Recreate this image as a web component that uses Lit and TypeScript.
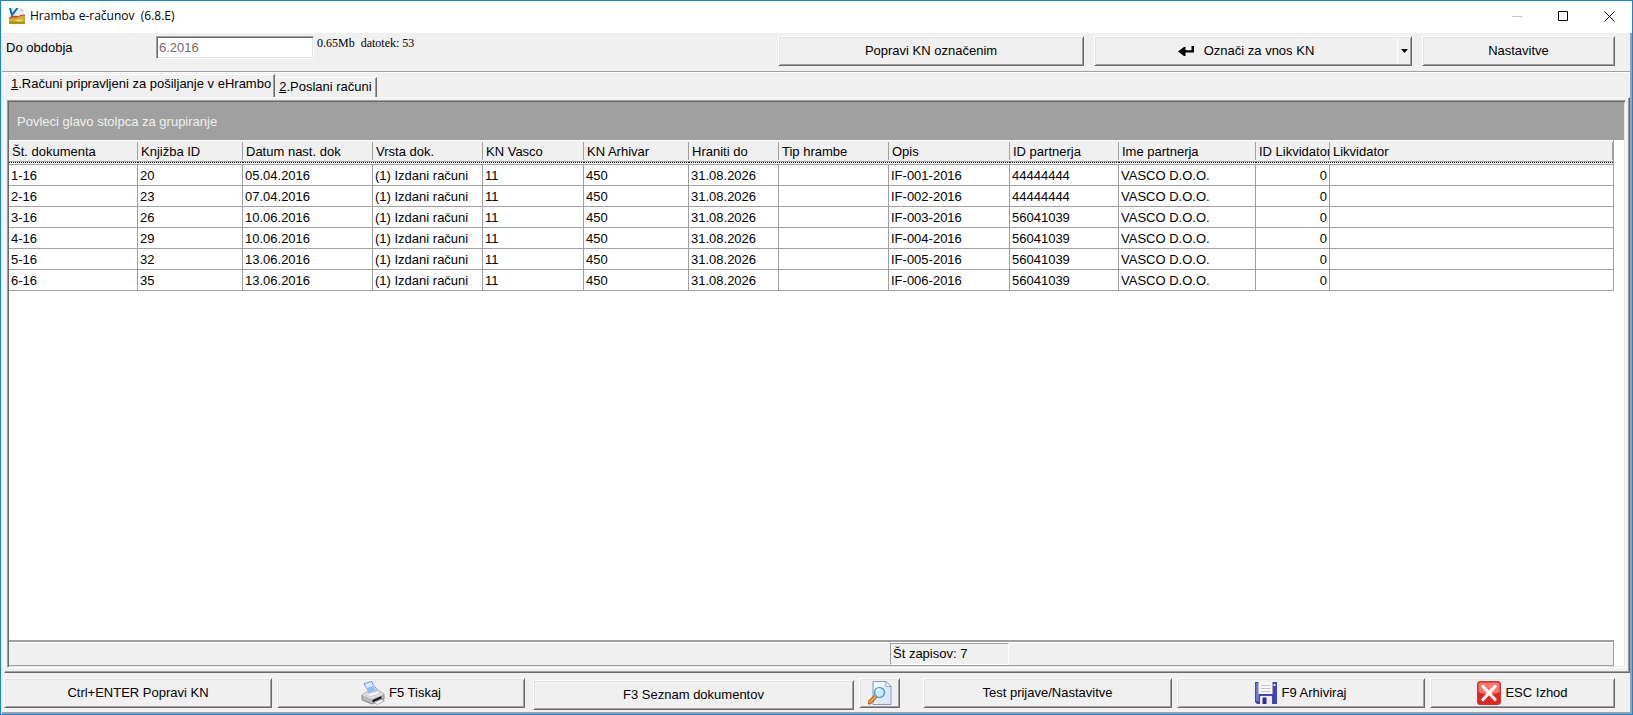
import { LitElement, html, css, svg } from "lit";
import { customElement, state } from "lit/decorators.js";

interface Column {
  title: string;
  width: number | null;
  numeric?: boolean;
}

const COLUMNS: Column[] = [
  { title: "Št. dokumenta", width: 129 },
  { title: "Knjižba ID", width: 105 },
  { title: "Datum nast. dok", width: 130 },
  { title: "Vrsta dok.", width: 110 },
  { title: "KN Vasco", width: 101 },
  { title: "KN Arhivar", width: 105 },
  { title: "Hraniti do", width: 90 },
  { title: "Tip hrambe", width: 110 },
  { title: "Opis", width: 121 },
  { title: "ID partnerja", width: 109 },
  { title: "Ime partnerja", width: 137 },
  { title: "ID Likvidator", width: 74, numeric: true },
  { title: "Likvidator", width: null },
];

const record = (n: number, id: string, date: string, partner: string) => [
  `${n}-16`, id, date, "(1) Izdani računi", "11", "450", "31.08.2026", "",
  `IF-00${n}-2016`, partner, "VASCO D.O.O.", "0", "",
];

const ROWS = [
  record(1, "20", "05.04.2016", "44444444"),
  record(2, "23", "07.04.2016", "44444444"),
  record(3, "26", "10.06.2016", "56041039"),
  record(4, "29", "10.06.2016", "56041039"),
  record(5, "32", "13.06.2016", "56041039"),
  record(6, "35", "13.06.2016", "56041039"),
];

const appIcon = html`<svg width="16" height="16" viewBox="0 0 16 16" aria-hidden="true">
  ${svg`<path d="M1 0h11l3 3v8H1z" fill="#e3eef4"/>
  <path d="M12 0l3 3h-3z" fill="#b9ccd4"/>
  <path d="M0 11C4 6.500 7 10 10 8.500s4-1 6-1V16H0z" fill="#d0b02a"/>
  <path d="M0 10C4 6 7 9 10 7.700s4-1.200 6-1.200v1.300c-3 0-5 .5-7 1.400s-6-.5-9 2z" fill="#c8433c"/>
  <path d="M0 14c4-2 8 1 16-1v3H0z" fill="#b3930f"/>
  <path d="M6.500 12.500h2m1-1v2m1.500-2v2m2-2v2" stroke="#f3e7a5"/>
  <path d="M1 0L3 7L8.500 0" fill="none" stroke="#1769b5" stroke-width="2"/>`}
</svg>`;

const enterIcon = html`<svg width="16" height="10" viewBox="0 0 16 10" aria-hidden="true">
  ${svg`<path d="M13.500 0H16v6.600H7.500V10H6L0 5.400L6 1h1.500v3.200h6z" fill="#000"/>`}
</svg>`;

const printerIcon = html`<svg width="24" height="24" viewBox="0 0 24 24" aria-hidden="true">
  ${svg`<path d="M3 2.500l8-2c0 4 5 6 5.500 9.500l-8 3C8 9 4 6 3 2.500z" fill="#d5e9ff" stroke="#6a7fd0" stroke-width=".8"/>
  <path d="M6 7l6-2 3 4-7 3z" fill="#8fc0f7"/>
  <path d="M1 14l6-4 1 2 9-3 6 4v5l-12 5L1 19z" fill="#b8b8bc" stroke="#77777c" stroke-width=".8"/>
  <path d="M1 14l6-4 1 2 9-3 6 4-12 5z" fill="#e4e4e8"/>
  <path d="M4 14l4-2 9-2 3 2-10 3.500z" fill="#f7f7fa" stroke="#a8a8ae" stroke-width=".5"/>
  <path d="M5 11.500l3 1.500 8.500-3-.5-1.500-8 3z" fill="#a9cdf8"/>
  <path d="M11.500 19l9-4v2.500l-9 4z" fill="#17171a"/>
  <path d="M13 21.500l7-3 3.500 1.500-7 3.500z" fill="#f4f4f6" stroke="#88888c" stroke-width=".6"/>`}
</svg>`;

const previewIcon = html`<svg width="24" height="24" viewBox="0 0 24 24" aria-hidden="true">
  ${svg`<path d="M5 .5h13l5 5v18H5z" fill="#dce9fb" stroke="#8795c8"/>
  <path d="M6 1h11l-9 22H6z" fill="#f3f8ff"/>
  <path d="M18 .5v5h5z" fill="#fff" stroke="#8795c8" stroke-width=".8"/>
  <path d="M8 15L1.500 21.500" stroke="#a85c12" stroke-width="4" stroke-linecap="round"/>
  <path d="M8 15L1.800 21.200" stroke="#f6a233" stroke-width="2.400" stroke-linecap="round"/>
  <circle cx="11.500" cy="11.500" r="5" fill="#c9edff" stroke="#5c9fd6" stroke-width="1.600"/>
  <path d="M8.500 11a3 3 0 0 1 3-3" fill="none" stroke="#fff" stroke-width="1.400"/>`}
</svg>`;

const diskIcon = html`<svg width="22" height="22" viewBox="0 0 22 22" aria-hidden="true">
  ${svg`<path d="M0 0h22v22H2l-2-2z" fill="#4444b4"/>
  <path d="M1 1h3v18H1z" fill="#7474d8"/>
  <path d="M3.500 0h14v12h-14z" fill="#f8f8f8"/>
  <path d="M6 3.500h9.500M6 6.500h9.500M6 9.500h9.500" stroke="#c4c4c4"/>
  <path d="M5 14h12v8H5z" fill="#ececf2"/>
  <path d="M7.500 15.500h4V22h-4z" fill="#30308c"/>
  <path d="M18.500 2h2v2h-2z" fill="#e4e4f8"/>`}
</svg>`;

const closeIcon = html`<svg width="24" height="24" viewBox="0 0 24 24" aria-hidden="true">
  ${svg`<rect x=".5" y=".5" width="23" height="23" rx="2.500" fill="#e5231f" stroke="#c23a33"/>
  <path d="M1.500 3a2 2 0 0 1 2-1.500h17a2 2 0 0 1 2 1.500v8c-6 3-15 3-21 0z" fill="#f4786c"/>
  <path d="M6 5.500l12 13M18 5.500L6 18.500" stroke="#fff" stroke-width="3.200" stroke-linecap="round"/>`}
</svg>`;

@customElement("app-root")
export class AppRoot extends LitElement {
  @state() private tab = 0;

  static styles = css`
    :host {
      display: flex;
      flex-direction: column;
      box-sizing: border-box;
      height: 100vh;
      border: 1px solid #1883d7;
      background: #f0f0f0;
      color: #000;
      font: 13px/20px "Liberation Sans", Arial, sans-serif;
    }
    * { box-sizing: border-box; }
    button {
      margin: 0;
      padding: 0;
      border: 0;
      background: none;
      color: inherit;
      font: inherit;
      white-space: nowrap;
    }
    svg { display: block; flex: none; }

    .titlebar {
      display: flex;
      align-items: center;
      height: 32px;
      padding: 0 8px 2px;
      background: #fff;
      font: 12px/16px "Open Sans", "Noto Sans", sans-serif;
    }
    .titlebar h1 {
      flex: 1;
      margin: 0 5px;
      font: inherit;
      white-space: pre;
    }
    .caption { display: flex; gap: 16px; }
    .caption button {
      display: flex;
      width: 30px;
      height: 28px;
      align-items: center;
      justify-content: center;
    }

    .body {
      flex: 1;
      min-height: 0;
      display: flex;
      flex-direction: column;
      margin-left: 1px;
      border-right: 2px solid #a0a0a0;
      border-bottom: 2px solid #a0a0a0;
    }

    .bevel {
      display: flex;
      align-items: center;
      justify-content: center;
      height: 30px;
      min-width: 0;
      gap: 4px;
      border: 1px solid;
      border-color: #fff #696969 #696969 #fff;
      box-shadow: inset 1px 1px #e3e3e3, inset -1px -1px #a0a0a0;
      background: #f0f0f0;
    }

    .toolbar {
      display: flex;
      height: 39px;
      padding: 3px 15px 0 4px;
      border-bottom: 1px solid #a0a0a0;
    }
    .period { flex: 772 1 0; display: flex; }
    .period label { width: 150px; padding-top: 2px; }
    .period input {
      width: 158px;
      height: 23px;
      margin: 0;
      padding: 0 2px;
      border: 1px solid;
      border-color: #a0a0a0 #fff #fff #a0a0a0;
      box-shadow: inset 1px 1px #696969, inset -1px -1px #e3e3e3;
      background: #fff;
      color: #6d6d6d;
      font: inherit;
      outline: 0;
    }
    .size {
      padding-left: 3px;
      font: 12px/14px "Liberation Serif", "Times New Roman", serif;
      white-space: pre;
    }
    .actions {
      flex: 837 1 0;
      display: grid;
      grid-template-columns: 306fr 318fr 193fr;
      gap: 10px;
    }
    .split { gap: 0; justify-content: stretch; }
    .split button {
      display: flex;
      align-items: center;
      justify-content: center;
      height: 26px;
    }
    .split .main { flex: 1; gap: 10px; }
    .split .drop { width: 14px; border-left: 1px solid #fff; }

    .tabs {
      display: flex;
      align-items: flex-end;
      height: 25px;
      padding-left: 2px;
      border-top: 1px solid #fff;
    }
    .tab {
      height: 20px;
      padding: 0 4px 2px;
      border-top: 1px solid #fff;
      border-right: 1px solid #696969;
      box-shadow: inset -1px 0 #a0a0a0;
      line-height: 18px;
    }
    .tab.on {
      height: 23px;
      padding: 0 3px 4px 6px;
      border-left: 1px solid #fff;
    }
    u { text-underline-offset: 1px; }

    .pane {
      flex: 1;
      min-height: 0;
      display: flex;
      margin-left: 2px;
      padding: 2px 3px 4px 2px;
      border: 1px solid;
      border-color: #fff #696969 #696969 #fff;
      box-shadow: inset -1px -1px #a0a0a0;
    }
    .grid {
      flex: 1;
      min-width: 0;
      display: flex;
      flex-direction: column;
      border: 1px solid;
      border-color: #a0a0a0 #fff #fff #a0a0a0;
      box-shadow: inset 1px 1px #696969, inset -1px -1px #e3e3e3;
      padding: 1px;
      background: #fff;
    }
    .groupbar {
      height: 38px;
      padding: 10px 8px 0;
      background: #a0a0a0;
      color: #f0f0f0;
    }
    .records {
      flex: 1;
      min-height: 0;
      overflow: hidden;
      padding-right: 10px;
    }
    table {
      width: 100%;
      table-layout: fixed;
      border-collapse: separate;
      border-spacing: 0;
    }
    th {
      height: 25px;
      padding: 2px 1px 3px 3px;
      background:
        linear-gradient(#a0a0a0, #a0a0a0) right 0 top 2px / 1px 18px no-repeat,
        linear-gradient(#fff, #fff) 0 0 / 100% 1px no-repeat,
        linear-gradient(#a0a0a0, #a0a0a0) 0 21px / 100% 1px no-repeat,
        repeating-linear-gradient(90deg, #000 0 1px, #fff 1px 2px) 0 22px / 100% 1px no-repeat,
        linear-gradient(#fff, #fff) 0 23px / 100% 1px no-repeat,
        linear-gradient(#a0a0a0, #a0a0a0) 0 24px / 100% 1px no-repeat,
        #f0f0f0;
      font-weight: normal;
      text-align: left;
    }
    th:last-child { border-right: 1px solid #a0a0a0; }
    th div, td div {
      overflow: hidden;
      white-space: nowrap;
    }
    td {
      height: 21px;
      padding: 2px 2px 0;
      border-right: 1px solid #a0a0a0;
      border-bottom: 1px solid #a0a0a0;
      line-height: 18px;
    }
    td.num { text-align: right; }

    .summary {
      height: 26px;
      margin-right: 10px;
      padding: 1px 0 0 881px;
      border: solid #a0a0a0;
      border-width: 2px 1px 1px 0;
      background: #f0f0f0;
      box-shadow: inset 0 1px #fff;
    }
    .count {
      width: 119px;
      height: 22px;
      padding-left: 2px;
      border: 1px solid;
      border-color: #a0a0a0 #fff #fff #a0a0a0;
    }

    .commands {
      display: grid;
      grid-template-columns: 268fr 248fr 324fr 41px 267fr 248fr 185fr;
      column-gap: 5px;
      height: 39px;
      padding: 5px 15px 0 2px;
    }
    .low { margin: 2px 0 0 3px; }
    .apart { margin-left: 18px; }
  `;

  private tabButton(index: number, label: string) {
    const on = this.tab === index;
    return html`<button class="tab ${on ? "on" : ""}" role="tab" aria-selected=${on}
      @click=${() => (this.tab = index)}><u>${index + 1}</u>.${label}</button>`;
  }

  render() {
    return html`
      <header class="titlebar">
        ${appIcon}
        <h1>Hramba e-računov  (6.8.E)</h1>
        <div class="caption">
          <button aria-label="Pomanjšaj"><svg width="10" height="10">${svg`<path d="M0 5.500h10" stroke="#c4c4c4"/>`}</svg></button>
          <button aria-label="Povečaj"><svg width="10" height="10">${svg`<path d="M.5 .5h9v9h-9z" fill="none" stroke="#000"/>`}</svg></button>
          <button aria-label="Zapri"><svg width="11" height="11">${svg`<path d="M.5 .5l10 10M10.500 .5l-10 10" stroke="#000"/>`}</svg></button>
        </div>
      </header>
      <main class="body">
        <div class="toolbar">
          <div class="period">
            <label for="period">Do obdobja</label>
            <input id="period" value="6.2016" readonly />
            <span class="size">0.65Mb  datotek: 53</span>
          </div>
          <div class="actions">
            <button class="bevel">Popravi KN označenim</button>
            <div class="bevel split">
              <button class="main">${enterIcon}Označi za vnos KN</button>
              <button class="drop" aria-label="Več možnosti"><svg width="7" height="4">${svg`<path d="M0 0h7L3.500 4z"/>`}</svg></button>
            </div>
            <button class="bevel">Nastavitve</button>
          </div>
        </div>
        <div class="tabs" role="tablist">
          ${this.tabButton(0, "Računi pripravljeni za pošiljanje v eHrambo")}
          ${this.tabButton(1, "Poslani računi")}
        </div>
        <section class="pane">
          <div class="grid">
            <div class="groupbar">Povleci glavo stolpca za grupiranje</div>
            <div class="records">
              <table>
                <colgroup>
                  ${COLUMNS.map((c) => html`<col style=${c.width ? `width:${c.width}px` : ""} />`)}
                </colgroup>
                <thead>
                  <tr>${COLUMNS.map((c) => html`<th><div>${c.title}</div></th>`)}</tr>
                </thead>
                <tbody>
                  ${ROWS.map((row) => html`<tr>
                    ${row.map((cell, i) => html`<td class=${COLUMNS[i].numeric ? "num" : ""}><div>${cell}</div></td>`)}
                  </tr>`)}
                </tbody>
              </table>
            </div>
            <div class="summary"><div class="count">Št zapisov: 7</div></div>
          </div>
        </section>
        <footer class="commands">
          <button class="bevel">Ctrl+ENTER Popravi KN</button>
          <button class="bevel">${printerIcon}F5 Tiskaj</button>
          <button class="bevel low">F3 Seznam dokumentov</button>
          <button class="bevel" aria-label="Predogled">${previewIcon}</button>
          <button class="bevel apart">Test prijave/Nastavitve</button>
          <button class="bevel">${diskIcon}F9 Arhiviraj</button>
          <button class="bevel">${closeIcon}ESC Izhod</button>
        </footer>
      </main>
    `;
  }
}
